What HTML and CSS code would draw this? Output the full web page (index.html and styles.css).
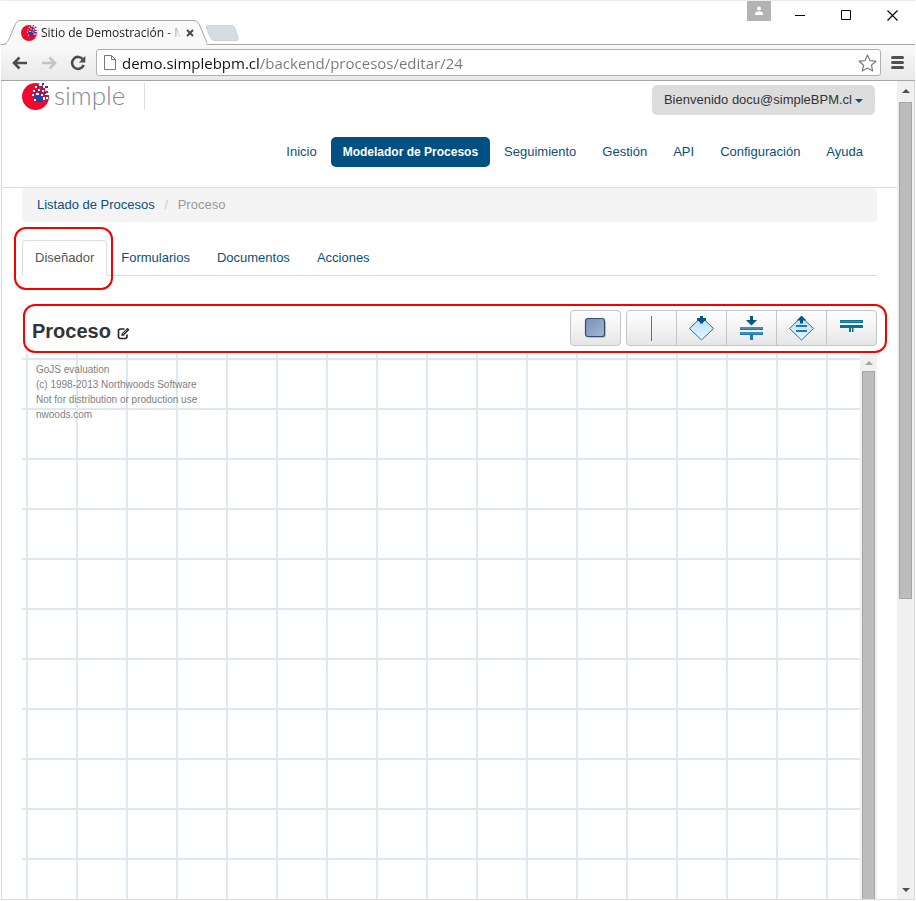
FILE: index.html
```html
<!DOCTYPE html>
<html lang="es">
<head>
    <meta charset="UTF-8">
    <meta name="viewport" content="width=device-width, initial-scale=1.0">
    <title>Sitio de Demostración - Modelador</title>
    <link rel="stylesheet" href="styles.css">
</head>
<body>
    <svg class="defs" width="0" height="0" aria-hidden="true">
        <symbol id="ball" viewBox="0 0 27 27">
            <circle cx="13.5" cy="13.5" r="13.5" fill="#ee0a2c"/>
            <path fill="#fff" d="M13 3h2v2h-2zM17 1h3v2h-3zM21 2h3v3h-3zM11 7h2v2h-2zM16 6h2v2h-2zM20 7h2v2h-2zM23 5h4v3h-4zM10 11h2v2h-2zM14 10h3v2h-3zM19 11h2v2h-2zM23 10h4v2h-4zM21 14h2v3h-2zM24 14h2v2h-2zM12 16h2v2h-2z"/>
            <path fill="#1c45a5" d="M15 3h2v2h-2zM19 4h2v3h-2zM13 7h3v2h-3zM17 8h3v3h-3zM11 9h2v2h-2zM22 9h2v2h-2zM14 12h5v2h-5zM12 13h9v3h-9zM14 16h7v3h-7zM23 3h3v2h-3zM20 0h2v2h-2zM23 12h2v2h-2z"/>
        </symbol>
    </svg>

    <div class="titlebar">
        <div class="tab">
            <svg class="tab-shape" width="206" height="26" viewBox="0 0 206 26">
                <path d="M0 25C5 25 6 24 8 20L14 5C15.500 1.500 17 .5 20 .5H192C195 .5 197 1.500 198.500 5L205 21C206 24 206 25 206 25V26H0z" fill="#f9f9f9"/>
                <path d="M0 24.500C5 24.500 6 23 8 19L14 5C15.500 1.500 17 .5 20 .5H192C195 .5 197 1.500 198.500 5L204 18C206 23 206 24 206 24.500" fill="none" stroke="#a6a6a6"/>
            </svg>
            <svg class="tab-icon" width="16" height="16"><use href="#ball"/></svg>
            <span class="tab-title">Sitio de Demostración - M</span>
            <button class="tab-close" aria-label="Cerrar pestaña">
                <svg width="8" height="8" viewBox="0 0 8 8"><path d="M1 1l6 6M7 1L1 7" stroke="#444" stroke-width="1.800"/></svg>
            </button>
        </div>
        <button class="new-tab" aria-label="Nueva pestaña">
            <svg width="34" height="18" viewBox="0 0 34 18"><path d="M3 1.500h23c2 0 3 .5 4 3l3 9c.5 2 0 3-2 3H10c-2.500 0-3.500-1-4.500-3L1.500 4C1 2.500 1.500 1.500 3 1.500z" fill="#d6dce4" stroke="#ccd1d8"/></svg>
        </button>
        <div class="window-buttons">
            <button class="user" aria-label="Usuario">
                <svg width="10" height="10" viewBox="0 0 10 10" fill="#fff"><circle cx="5" cy="2.500" r="2"/><path d="M1 9V7.500C1 6 3 5.500 5 5.500S9 6 9 7.500V9z"/></svg>
            </button>
            <button aria-label="Minimizar"><svg width="11" height="11"><path d="M0 5.500h10" stroke="#000"/></svg></button>
            <button aria-label="Maximizar"><svg width="11" height="11"><path d="M.5.5h9v9h-9z" fill="none" stroke="#000"/></svg></button>
            <button aria-label="Cerrar"><svg width="11" height="11"><path d="M.5.5l10 10M10.500.5l-10 10" stroke="#000" stroke-width="1.200"/></svg></button>
        </div>
    </div>

    <div class="toolbar">
        <button aria-label="Atrás">
            <svg width="16" height="14" viewBox="0 0 16 14"><path d="M15 7H2M7.500 1.500L2 7l5.500 5.500" fill="none" stroke="#4d4d4d" stroke-width="2.600"/></svg>
        </button>
        <button aria-label="Adelante">
            <svg width="16" height="14" viewBox="0 0 16 14"><path d="M1 7h13M8.500 1.500L14 7l-5.500 5.500" fill="none" stroke="#c4c4c4" stroke-width="2.600"/></svg>
        </button>
        <button aria-label="Recargar">
            <svg width="16" height="16" viewBox="0 0 16 16"><path d="M13 4.500A6 6 0 1 0 13.700 10" fill="none" stroke="#4d4d4d" stroke-width="2.600"/><path d="M15.300 1v6.500H8.800z" fill="#4d4d4d"/></svg>
        </button>
        <div class="address">
            <svg width="12" height="15" viewBox="0 0 12 15"><path d="M.5.5h7l4 4v10H.5zM7.500.5v4h4" fill="#fff" stroke="#777"/></svg>
            <input class="url" type="text" aria-label="Dirección" value="demo.simplebpm.cl/backend/procesos/editar/24">
            <button aria-label="Favorito">
                <svg width="19" height="18" viewBox="0 0 19 18"><path d="M9.500 1l2.400 5.600 6 .6-4.500 4 1.300 5.800-5.200-3-5.200 3 1.300-5.800-4.500-4 6-.6z" fill="#fff" stroke="#7d7d7d" stroke-width="1.200" stroke-linejoin="round"/></svg>
            </button>
        </div>
        <button class="menu" aria-label="Menú">
            <svg width="13" height="13" viewBox="0 0 13 13"><path d="M1.500 1.500h10M1.500 6.500h10M1.500 11.500h10" stroke="#505050" stroke-width="3" stroke-linecap="round"/></svg>
        </button>
    </div>

    <div class="viewport">
        <div class="page">
            <header class="header">
                <div class="header-top">
                    <a class="logo" href="#">
                        <svg width="27" height="27"><use href="#ball"/></svg>
                        <span>simple</span>
                    </a>
                    <button class="account">Bienvenido docu@simpleBPM.cl<span class="caret"></span></button>
                </div>
                <nav class="nav">
                    <a href="#">Inicio</a>
                    <a href="#" class="active">Modelador de Procesos</a>
                    <a href="#">Seguimiento</a>
                    <a href="#">Gestión</a>
                    <a href="#">API</a>
                    <a href="#">Configuración</a>
                    <a href="#">Ayuda</a>
                </nav>
            </header>

            <main class="content">
                <div class="breadcrumb">
                    <a href="#">Listado de Procesos</a>
                    <span class="divider">/</span>
                    <span class="current">Proceso</span>
                </div>

                <div class="tabs">
                    <a href="#" class="active marked">Diseñador</a>
                    <a href="#">Formularios</a>
                    <a href="#">Documentos</a>
                    <a href="#">Acciones</a>
                </div>

                <div class="process-bar marked">
                    <h1>Proceso</h1>
                    <a href="#" class="edit" aria-label="Editar">
                        <svg width="13" height="13" viewBox="0 0 13 13"><path d="M7.500 2H3.500Q1.500 2 1.500 4v5.500q0 2 2 2H8q2 0 2-2V7.500" fill="none" stroke="#222" stroke-width="1.600"/><path d="M4.500 9V6.800L10.500.8l2 2-6 6z" fill="#222"/><path d="M5.600 7.300l4.600-4.600" stroke="#fff" stroke-width=".7"/></svg>
                    </a>
                    <div class="button-group">
                        <button aria-label="Tarea">
                            <svg width="25" height="24" viewBox="0 0 25 24">
                                <defs><linearGradient id="task" x1="0" y1="0" x2="1" y2="1"><stop offset="0" stop-color="#7592b8"/><stop offset="1" stop-color="#a3b7d2"/></linearGradient></defs>
                                <rect x="4" y="4" width="19" height="18" rx="3" fill="#000" opacity=".2"/>
                                <rect x="2.500" y="2.500" width="19" height="18" rx="2.500" fill="url(#task)" stroke="#344e70" stroke-width="1.200"/>
                            </svg>
                        </button>
                    </div>
                    <div class="button-group">
                        <button aria-label="Secuencial">
                            <svg width="25" height="26" viewBox="0 0 25 26"><path d="M12.500 1v25" stroke="#3183a8"/></svg>
                        </button>
                        <button aria-label="Evaluación">
                            <svg width="25" height="26" viewBox="0 0 25 26">
                                <defs><linearGradient id="sky" x1="0" y1="0" x2="0" y2="1"><stop offset="0" stop-color="#b5defa"/><stop offset="1" stop-color="#e6f5ff"/></linearGradient></defs>
                                <path d="M12.500 2l12 11.500L12.500 25l-12-11.500z" fill="url(#sky)" stroke="#1878a3"/><path d="M11 1h3v2h3v3h-2v1h-1v1.500h-3V7h-1V6H8V3h3z" fill="#04588a"/>
                            </svg>
                        </button>
                        <button aria-label="Paralelo">
                            <svg width="25" height="26" viewBox="0 0 25 26"><path d="M11 1h3v4h4l-5.500 5.500L7 5h4z" fill="#04588a"/><path d="M1 12h23v3H1zM1 17h23v3H14v5h-3v-5H1z" fill="#2476b0"/><path d="M1.500 13h22M1.500 18h22" stroke="#5da4d6"/></svg>
                        </button>
                        <button aria-label="Paralelo con evaluación">
                            <svg width="25" height="26" viewBox="0 0 25 26"><path d="M12.500 2l12 11.500L12.500 25l-12-11.500z" fill="url(#sky)" stroke="#1878a3"/><path d="M12 1h1l4.500 4.500H14v3h-3v-3H7.500z" fill="#04588a"/><path d="M7 11h11M7 16h11" stroke="#2476b0" stroke-width="2"/></svg>
                        </button>
                        <button aria-label="Unión">
                            <svg width="25" height="26" viewBox="0 0 25 26"><path d="M1 5h23v3H1zM1 10h23v3h-9.500v4h-1.500v-4h-1v4h-2v-4H1z" fill="#087297"/><path d="M1.500 6.500h22" stroke="#2f9ab8"/></svg>
                        </button>
                    </div>
                </div>

                <div class="diagram">
                    <div class="grid">
                        <p>GoJS evaluation<br>(c) 1998-2013 Northwoods Software<br>Not for distribution or production use<br>nwoods.com</p>
                    </div>
                    <div class="scrollbar inner">
                        <span class="arrow up"></span>
                        <span class="thumb"></span>
                    </div>
                </div>
            </main>
        </div>
        <div class="scrollbar">
            <span class="arrow up"></span>
            <div class="track"><span class="thumb"></span></div>
            <span class="arrow down"></span>
        </div>
    </div>
</body>
</html>
```
FILE: styles.css
```css
* {
    box-sizing: border-box;
}
body {
    margin: 0;
    height: 100vh;
    display: flex;
    flex-direction: column;
    padding: 0 1px 1px;
    overflow: hidden;
    background: #fff;
    font-family: "Liberation Sans", Arial, sans-serif;
    font-size: 13px;
    line-height: 18px;
    color: #333;
}
a {
    color: #0b4f7d;
    text-decoration: none;
}
button {
    padding: 0;
    border: none;
    background: none;
    font: inherit;
    color: inherit;
    cursor: pointer;
}
svg {
    display: block;
}
.defs {
    position: absolute;
}

/* browser window */
.titlebar {
    height: 45px;
    flex: none;
    display: flex;
    align-items: flex-end;
    border-top: 1px solid #ebebeb;
    border-bottom: 1px solid #a6a6a6;
}
.tab {
    position: relative;
    display: flex;
    align-items: center;
    width: 206px;
    height: 25px;
    padding: 0 10px 0 20px;
    margin-bottom: -1px;
    font: 12px/18px "Open Sans", "Noto Sans", sans-serif;
    color: #222;
}
.tab-shape {
    position: absolute;
    left: 0;
    top: 0;
}
.tab-icon, .tab-title, .tab-close {
    position: relative;
    flex: none;
}
.tab-title {
    margin-left: 4px;
    white-space: nowrap;
    -webkit-mask-image: linear-gradient(to right, #000 126px, transparent 140px);
    mask-image: linear-gradient(to right, #000 126px, transparent 140px);
}
.tab-close {
    margin-left: auto;
    margin-right: 3px;
}
.new-tab {
    margin: 0 0 2px -2px;
}
.window-buttons {
    display: flex;
    align-self: flex-start;
    margin-left: auto;
}
.window-buttons button {
    width: 46px;
    height: 28px;
    display: flex;
    justify-content: center;
    align-items: center;
}
.window-buttons .user {
    width: 24px;
    height: 20px;
    margin-right: 6px;
    background: #b3b3b3;
}
.toolbar {
    height: 36px;
    flex: none;
    display: flex;
    align-items: center;
    gap: 13px;
    padding: 0 11px;
    background: linear-gradient(#f9f9f9, #e9e9e9);
    border-bottom: 1px solid #a6a6a6;
}
.address {
    flex: 1;
    height: 27px;
    display: flex;
    align-items: center;
    padding: 0 3px 0 7px;
    margin: 0 -3px;
    border: 1px solid #b0b0b0;
    border-radius: 3px;
    background: #fff;
}
.url {
    flex: 1;
    min-width: 0;
    height: 24px;
    margin-left: 6px;
    padding: 0;
    border: none;
    outline: none;
    font: 15px/24px "Open Sans", "Noto Sans", sans-serif;
    /* host in black, path in grey */
    background: linear-gradient(to right, #111 137px, #777 137px);
    -webkit-background-clip: text;
    background-clip: text;
    color: transparent;
}
.viewport {
    flex: 1;
    min-height: 0;
    display: flex;
    border: 1px solid #dcdcdc;
    border-top: none;
}
.page {
    flex: 1;
    min-width: 0;
    display: flex;
    flex-direction: column;
}

/* header */
.header {
    padding: 2px 20px 20px;
    border-bottom: 1px solid #ddd;
}
.header-top {
    display: flex;
    justify-content: space-between;
    align-items: flex-start;
}
.logo {
    display: flex;
    height: 27px;
    padding-right: 19px;
    border-right: 1px solid #ddd;
}
.logo span {
    margin-left: 5px;
    font: 300 26px/24px Lato, sans-serif;
    color: #838b9c;
}
.account {
    height: 30px;
    margin: 2px 2px 0 0;
    padding: 0 12px;
    border-radius: 5px;
    background: #ddd;
}
.caret {
    display: inline-block;
    margin-left: 3px;
    vertical-align: middle;
    border: 4px solid transparent;
    border-top-color: #005580;
    border-bottom: none;
}
.nav {
    display: flex;
    justify-content: flex-end;
    gap: 2px;
    margin: 22px 2px 0 0;
}
.nav a {
    padding: 6px 12px;
    border-radius: 5px;
}
.nav .active {
    background: #005083;
    color: #fff;
    font-size: 12px;
    font-weight: bold;
}

/* content */
.content {
    flex: 1;
    min-height: 0;
    display: flex;
    flex-direction: column;
    padding: 0 20px;
}
.breadcrumb {
    padding: 8px 15px;
    border-radius: 4px;
    background: #f4f4f4;
}
.divider {
    padding: 0 6px;
    color: #ccc;
}
.current {
    color: #999;
}
.tabs {
    display: flex;
    gap: 1px;
    margin-top: 18px;
    border-bottom: 1px solid #ddd;
}
.tabs a {
    padding: 8px 12px;
    margin-bottom: -1px;
    border: 1px solid transparent;
    border-radius: 4px 4px 0 0;
}
.tabs .active {
    border-color: #ddd;
    border-bottom-color: #fff;
    background: #fff;
    color: #555;
}
.marked {
    position: relative;
}
.marked::after {
    content: "";
    position: absolute;
    inset: -14px -7px -15px -9px;
    border: 2px solid #f60000;
    border-radius: 12px;
    pointer-events: none;
}
.process-bar {
    display: flex;
    align-items: center;
    margin: 34px 0 8px;
    padding-left: 10px;
}
.process-bar::after {
    inset: -6px -10px -7px 1px;
}
.process-bar h1 {
    margin: 6px 6px 0 0;
    font-size: 20px;
    line-height: 24px;
}
.edit {
    margin: 10px auto 0 0;
}
.button-group {
    display: flex;
    margin-left: 5px;
}
.button-group button {
    width: 51px;
    height: 36px;
    display: flex;
    justify-content: center;
    align-items: center;
    border: 1px solid #c5c5c5;
    background: linear-gradient(#fff, #e6e6e6);
}
.button-group button + button {
    margin-left: -1px;
}
.button-group button:first-child {
    border-top-left-radius: 4px;
    border-bottom-left-radius: 4px;
}
.button-group button:last-child {
    border-top-right-radius: 4px;
    border-bottom-right-radius: 4px;
}
.diagram {
    flex: 1;
    min-height: 0;
    display: flex;
}
.grid {
    flex: 1;
    padding: 8px 14px;
    background:
        linear-gradient(#dde9f0 2px, transparent 2px) 0 4px / 50px 50px,
        linear-gradient(to right, #dde9f0 2px, transparent 2px) 4px 0 / 50px 50px;
}
.grid p {
    margin: 0;
    font-size: 10px;
    line-height: 15px;
    color: #808080;
}

/* scrollbars */
.scrollbar {
    width: 17px;
    flex: none;
    display: flex;
    flex-direction: column;
    align-items: center;
    padding: 4px 0;
    background: #f0f0f0;
}
.track {
    flex: 1;
    width: 13px;
}
.thumb {
    display: block;
    width: 13px;
    height: 64%;
    border: 1px solid #a6a6a6;
    background: #bcbcbc;
}
.arrow {
    flex: none;
    margin: 4px 0 9px;
    border: 4px solid transparent;
}
.arrow.up {
    border-top: none;
    border-bottom-color: #505050;
}
.arrow.down {
    margin: 9px 0 3px;
    border-bottom: none;
    border-top-color: #505050;
}
.inner {
    padding: 3px 0 0;
}
.inner .arrow {
    margin-bottom: 6px;
    border-bottom-color: #a3a3a3;
}
.inner .thumb {
    flex: 1;
    border-bottom: none;
}
```
